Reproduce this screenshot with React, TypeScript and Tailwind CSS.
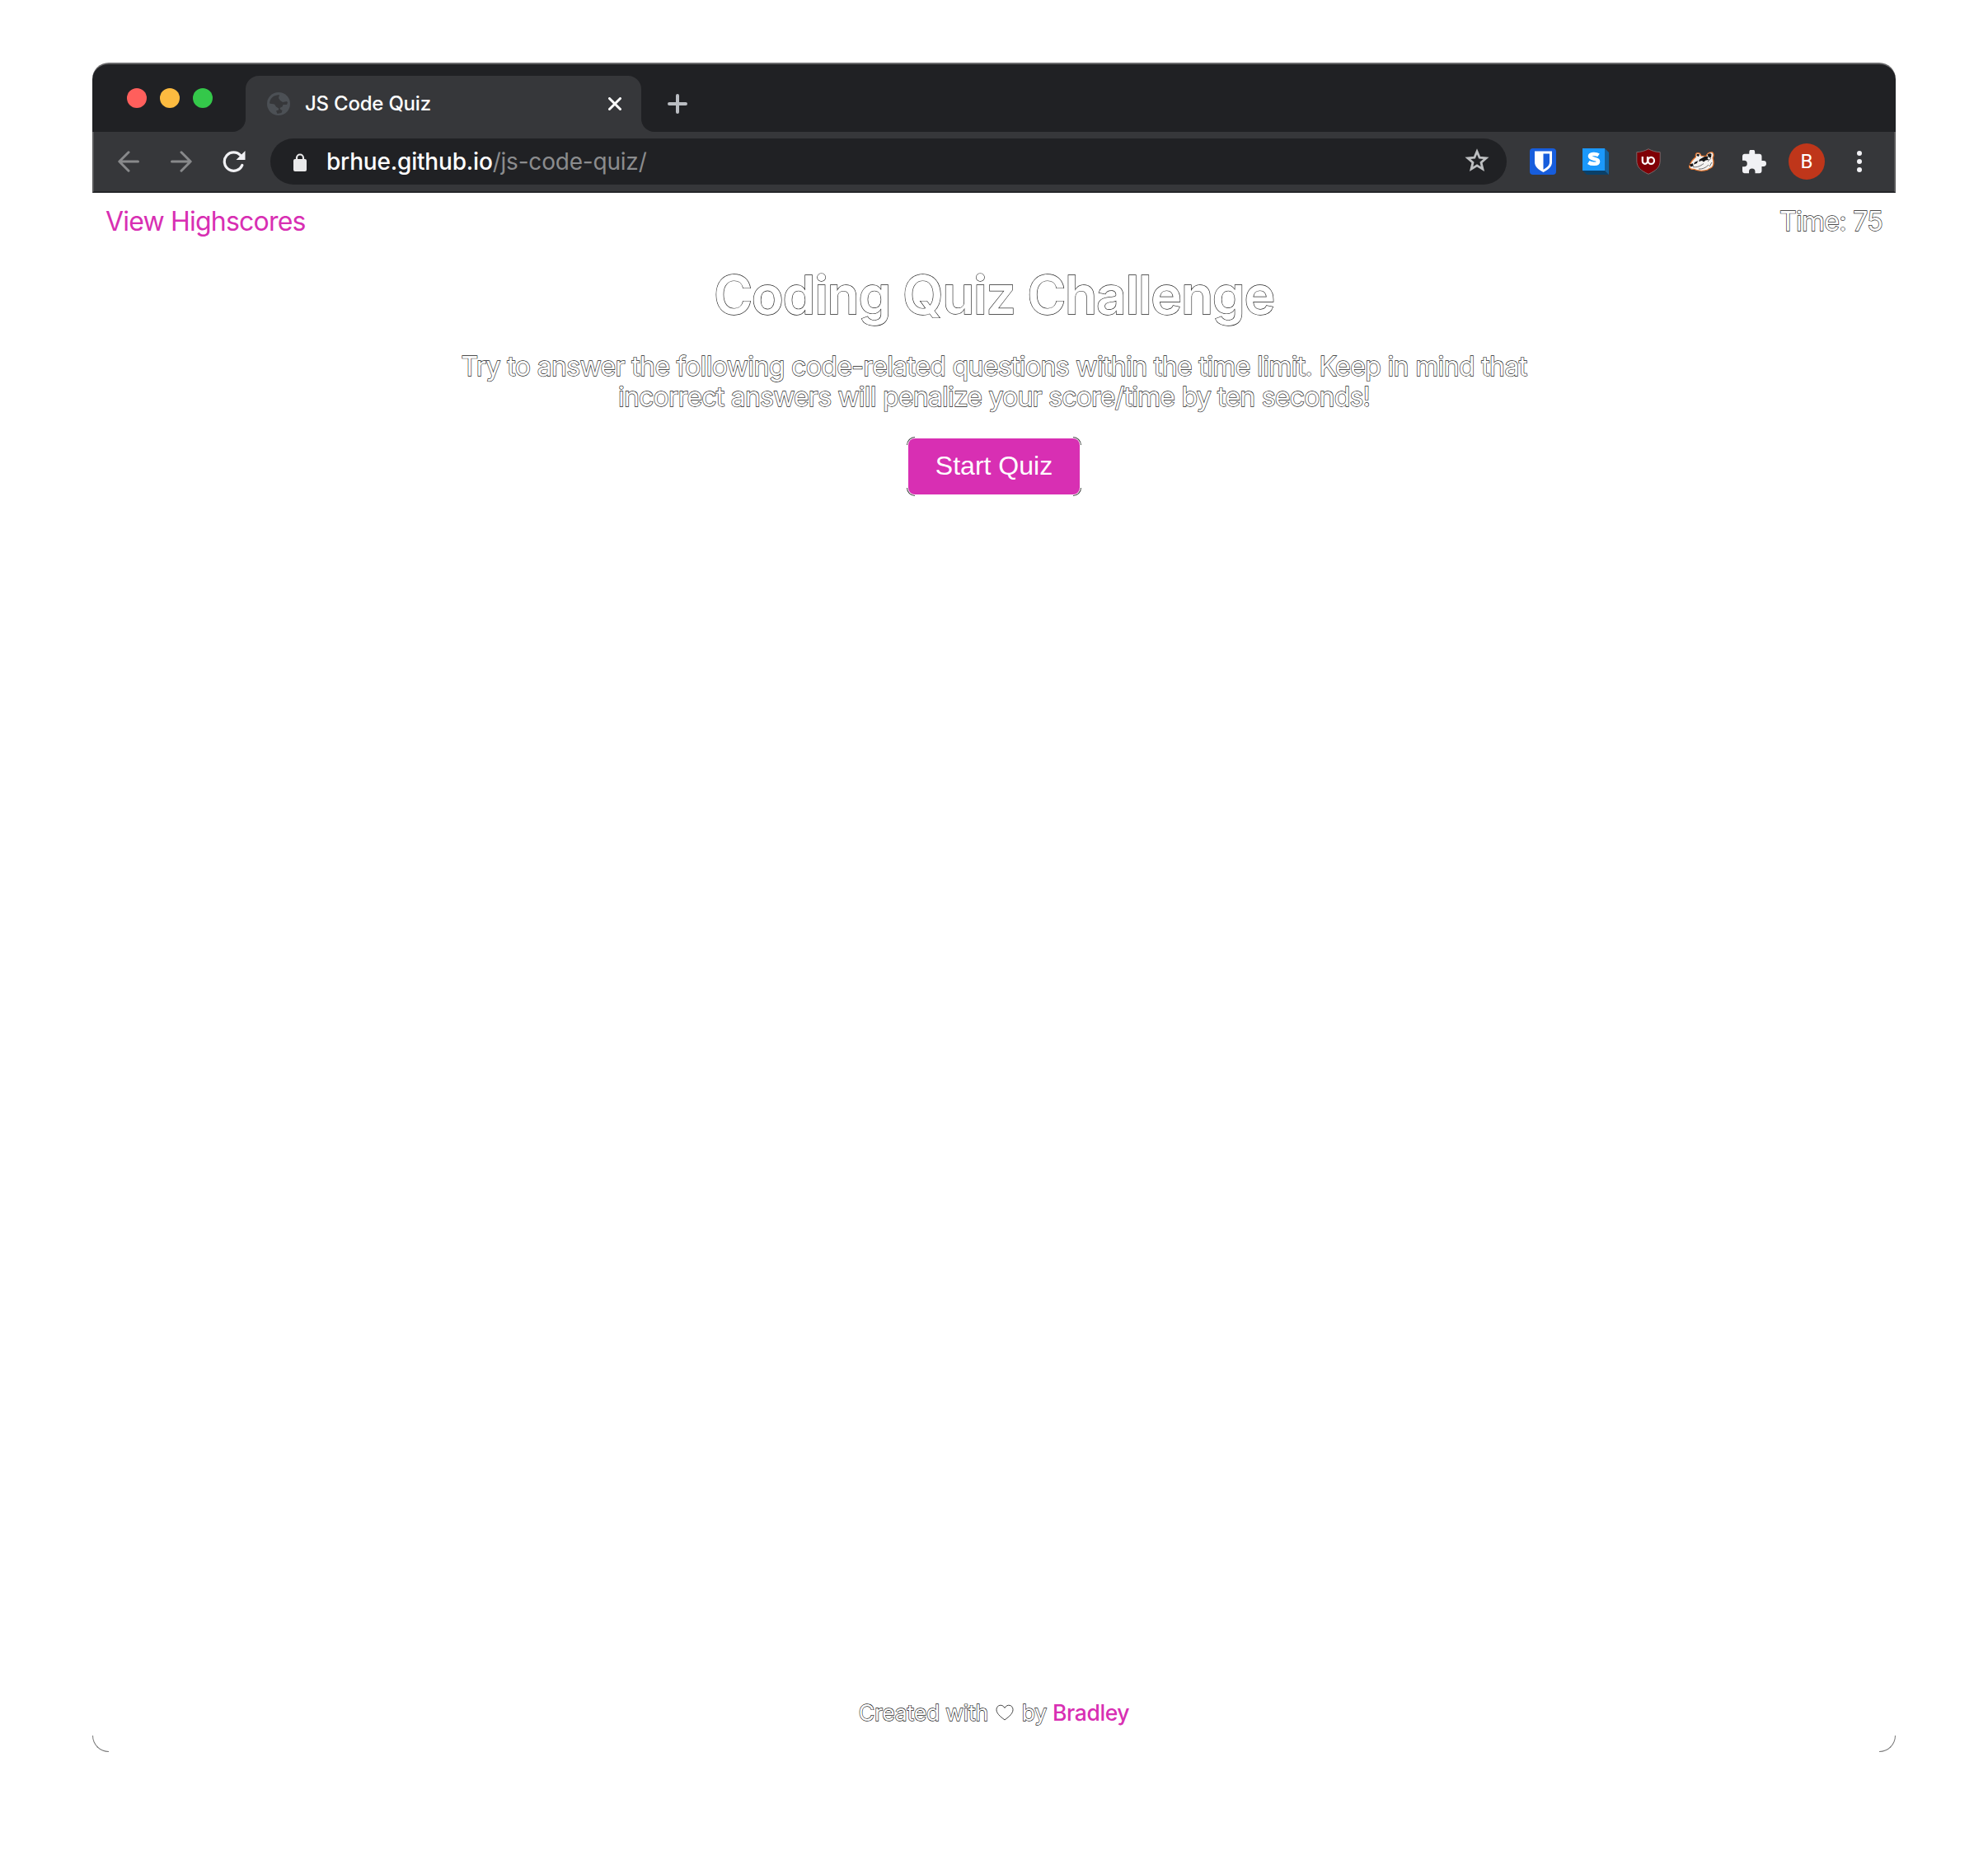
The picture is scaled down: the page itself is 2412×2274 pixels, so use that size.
import React from 'react';

const outlined = 'text-white [-webkit-text-stroke:1.3px_#222] [paint-order:stroke_fill]';

function Globe() {
  return (
    <svg className="size-7 shrink-0" viewBox="0 0 28 28">
      <circle cx="14" cy="14" r="14" fill="#4c5055" />
      <path fill="#36373a" d="M12 3.500l3-.5-1 4 2 3 3 2 5-1 1 1.500-1 2.500h-4.500l-1 2.500-3 1.500 1 2 2 1-1 3-5 1-1.500-3.500 3-1v-2l-3-2-2-3-6-1C3.500 8 7 4.200 12 3.500z" />
    </svg>
  );
}

function TabStrip() {
  return (
    <div className="flex h-[84px] items-end rounded-t-[20px] border-t-2 border-[#69696b] bg-[#202124] pl-[42px]">
      <div className="mb-[29px] flex gap-4">
        <span className="size-6 rounded-full bg-[#ff5f5c]" />
        <span className="size-6 rounded-full bg-[#fdbb40]" />
        <span className="size-6 rounded-full bg-[#34c84a]" />
      </div>
      <div className="ml-6 h-4 w-4 bg-[#36373a]">
        <div className="size-4 rounded-br-2xl bg-[#202124]" />
      </div>
      <div className="flex h-[68px] w-[480px] items-center rounded-t-2xl bg-[#36373a] pr-6 pl-[26px]">
        <Globe />
        <span className="ml-[18px] flex-1 text-[24px] leading-8 font-medium tracking-[-0.22px] text-white">JS Code Quiz</span>
        <svg className="size-4" viewBox="0 0 16 16" fill="none" stroke="#fff" strokeWidth="3" strokeLinecap="round">
          <path d="M1.500 1.500l13 13M14.500 1.500l-13 13" />
        </svg>
      </div>
      <div className="h-4 w-4 bg-[#36373a]">
        <div className="size-4 rounded-bl-2xl bg-[#202124]" />
      </div>
      <svg className="mb-[22px] ml-4 size-6" viewBox="0 0 24 24" fill="none" stroke="#babdc2" strokeWidth="4" strokeLinecap="round">
        <path d="M2 12h20M12 2v20" />
      </svg>
    </div>
  );
}

function BitwardenIcon() {
  return (
    <svg className="size-8" viewBox="0 0 32 32">
      <rect width="32" height="32" rx="4" fill="#175ddc" />
      <path fill="#fff" d="M6 3.500h21V17c0 5-4.500 9-10.500 12C10.500 26 6 22 6 17z" />
      <path fill="#175ddc" d="M16.500 6.500H24V17c0 3.500-3 6.300-7.500 8.700z" />
    </svg>
  );
}

function StylusIcon() {
  return (
    <svg className="size-8" viewBox="0 0 32 32">
      <path fill="#0a4069" d="M0 27h27l5 5H5z" />
      <path fill="#14609b" d="M27 0l5 5v27l-5-5z" />
      <rect width="27" height="27" fill="#1b98fb" />
      <path fill="none" stroke="#fff" strokeWidth="4.600" d="M19.500 8.400c-3-2-10.500-2-10.500 1.200 0 4.200 10 2.200 10 6.300 0 3.700-8 3.600-11.700 1.100" />
    </svg>
  );
}

function UblockIcon() {
  return (
    <svg className="h-8 w-[30px]" viewBox="0 0 30 32">
      <path fill="#800006" stroke="#77696b" d="M15 .7C11 3 6 4.600.8 4.600V15c0 8 5 12 14.200 16.300C24.200 27 29.200 23 29.200 15V4.600C24 4.600 19 3 15 .7z" />
      <path fill="none" stroke="#fff" strokeWidth="2.200" d="M7.800 10v5.500a3.100 3.300 0 0 0 6.200 0V10" />
      <ellipse cx="18.200" cy="14.900" rx="3.800" ry="4" fill="none" stroke="#fff" strokeWidth="2.200" />
    </svg>
  );
}

function BadgerIcon() {
  return (
    <svg className="h-6 w-8" viewBox="0 0 32 24">
      <path fill="#f4f2f0" stroke="#e8762c" strokeWidth="1.200" d="M9.500 6.500C8.500 2 11 .5 14.500 2.300L16 5l6 .5C23 2 26 .5 29.500.8c2.500 2 1.500 5 .5 7 1 3 1.500 8-.5 10.500-1.500 2-4 1.800-5.500 3.700-6 2-13 1-17-.7-3.500.4-6.500-1.500-5-4.500C3 13 6.500 9 9.500 6.500z" />
      <path fill="#18181a" d="M1.800 15.500l4-1.300 1 3.100-3.500 1.200zM10.500 5c-.5-2.500 1.500-3 3.500-1.500l-1 2.500zM23.500 4c1-2 4-2.500 5-1l-.5 4-1.500.8zM14 9.500l6-3.500 5.500-.5-2 2.500 2 2-4 .5-2.500 2-2-1.500-4 1zM8 13l4-2-1 3-4 1.500z" />
      <path fill="none" stroke="#4a4a4c" strokeWidth=".8" d="M6 18.500c5 1 9-1 13-4M13 21c5 .5 9-2 12-5M28 8l-4 4M29 13l-3 5" />
    </svg>
  );
}

function Toolbar() {
  return (
    <div className="flex h-[74px] items-center border-x-2 border-b-2 border-x-[#58585a] border-b-[#242528] bg-[#36373a] pr-[39px] pl-[29px]">
      <svg className="size-[26px]" viewBox="0 0 26 26" fill="none" stroke="#88898b" strokeWidth="3" strokeLinecap="round" strokeLinejoin="round">
        <path d="M24.500 13H2M13 1.800L1.800 13 13 24.200" />
      </svg>
      <svg className="ml-[38px] size-[26px]" viewBox="0 0 26 26" fill="none" stroke="#88898b" strokeWidth="3" strokeLinecap="round" strokeLinejoin="round">
        <path d="M1.500 13H24M13 1.800L24.200 13 13 24.200" />
      </svg>
      <svg className="ml-[37px] h-[26px] w-7" viewBox="0 0 28 26">
        <path fill="none" stroke="#f1f1f4" strokeWidth="3.200" strokeLinecap="round" d="M23.800 17.500A11.200 11.200 0 1 1 22 5.800" />
        <path fill="#f1f1f4" d="M27.500 0v11h-11z" />
      </svg>
      <div className="ml-[30px] flex h-14 w-[1500px] items-center rounded-full bg-[#202124] pr-[21px] pl-7">
        <svg className="mt-px h-[22px] w-4" viewBox="0 0 16 22">
          <rect y="7" width="16" height="15" rx="2" fill="#e9e9ea" />
          <path d="M4 9V5.500a4 4 0 0 1 8 0V9" fill="none" stroke="#e9e9ea" strokeWidth="2.200" />
        </svg>
        <div className="ml-6 flex-1 text-[28px] leading-9 font-medium tracking-[-0.2px] text-white">
          brhue.github.io<span className="font-normal text-[#8b8c8e]">/js-code-quiz/</span>
        </div>
        <svg className="-mt-1 h-[29px] w-[30px]" viewBox="0 0 30 29" fill="none" stroke="#bdbfc1" strokeWidth="2.800">
          <path d="M15 3.800l3.100 7.400 8 .7-6.100 5.300 1.900 7.900-6.900-4.200-6.900 4.200 1.900-7.900-6.100-5.300 8-.7z" />
        </svg>
      </div>
      <div className="ml-7 flex flex-1 items-center">
        <BitwardenIcon />
        <span className="ml-8 flex"><StylusIcon /></span>
        <span className="ml-[33px] flex"><UblockIcon /></span>
        <span className="ml-[33px] flex"><BadgerIcon /></span>
        <svg className="ml-[34px] size-[29px]" viewBox="2 1.500 21 21">
          <path fill="#f1f1f4" d="M20.500 11H19V7c0-1.100-.9-2-2-2h-4V3.500a2.500 2.500 0 0 0-5 0V5H4c-1.100 0-2 .9-2 2v3.800h1.500a2.700 2.700 0 0 1 0 5.400H2V20c0 1.100.9 2 2 2h3.800v-1.500a2.700 2.700 0 0 1 5.400 0V22H17c1.100 0 2-.9 2-2v-4h1.500a2.500 2.500 0 0 0 0-5z" />
        </svg>
        <span className="ml-[27px] flex size-11 items-center justify-center rounded-full bg-[#bf361a] font-[Roboto] text-[24px] text-white">B</span>
        <span className="ml-auto flex flex-col gap-1">
          <i className="size-1.5 rounded-full bg-[#f1f1f4]" />
          <i className="size-1.5 rounded-full bg-[#f1f1f4]" />
          <i className="size-1.5 rounded-full bg-[#f1f1f4]" />
        </span>
      </div>
    </div>
  );
}

export default function App() {
  return (
    <div className="h-[2274px] w-[2412px] bg-white px-28 pt-[76px] font-[Inter,sans-serif]">
      <div className="flex h-[2050px] w-[2188px] flex-col">
        <TabStrip />
        <Toolbar />
        <div className="flex flex-1 flex-col">
          <header className="flex justify-between px-4 pt-[15px] text-[32px] leading-10 tracking-[-0.8px]">
            <a className="text-[#d82fb3]">View Highscores</a>
            <span className={`tracking-[-0.7px] ${outlined}`}>Time: 75</span>
          </header>
          <main className="flex flex-col items-center text-center">
            <h1 className={`mt-[29px] text-[64px] leading-[80px] font-semibold tracking-[-1.3px] ${outlined}`}>Coding Quiz Challenge</h1>
            <p className={`mt-[29px] text-[32px] leading-[36.500px] tracking-[-0.64px] whitespace-nowrap ${outlined}`}>
              Try to answer the following code-related questions within the time limit. Keep in mind that
              <br />
              <span className="tracking-[-0.78px]">incorrect answers will penalize your score/time by ten seconds!</span>
            </p>
            <button className="relative mt-8 h-[68px] w-[208px] rounded-lg bg-[#d82fb3] pb-0.5 font-['Liberation_Sans'] text-[32px] leading-9 text-white">
              Start Quiz
              <i className="absolute -top-0.5 -left-0.5 size-2.5 rounded-tl-[10px] border-t border-l border-[#444]" />
              <i className="absolute -top-0.5 -right-0.5 size-2.5 rounded-tr-[10px] border-t border-r border-[#444]" />
              <i className="absolute -bottom-0.5 -left-0.5 size-2.5 rounded-bl-[10px] border-b border-l border-[#444]" />
              <i className="absolute -right-0.5 -bottom-0.5 size-2.5 rounded-br-[10px] border-r border-b border-[#444]" />
            </button>
          </main>
          <footer className="mt-auto flex items-end justify-between">
            <span className="size-5 rounded-bl-[20px] border-b border-l border-[#777]" />
            <div className="mb-7 flex items-center text-[26.500px] leading-10 tracking-[-0.2px]">
              <span className={outlined}>Created with</span>
              <svg className="mr-2.5 ml-[9px] h-5 w-[22px]" viewBox="0 0 22 20" fill="none" stroke="#444" strokeWidth="1">
                <path d="M11 19C5 14.500 1 11 1 6.500 1 1 8-1 11 4.500 14-1 21 1 21 6.500 21 11 17 14.500 11 19z" />
              </svg>
              <span className={outlined}>by</span>
              <a className="ml-[7px] font-medium tracking-[-0.4px] text-[#d82fb3]">Bradley</a>
            </div>
            <span className="size-5 rounded-br-[20px] border-r border-b border-[#777]" />
          </footer>
        </div>
      </div>
    </div>
  );
}
